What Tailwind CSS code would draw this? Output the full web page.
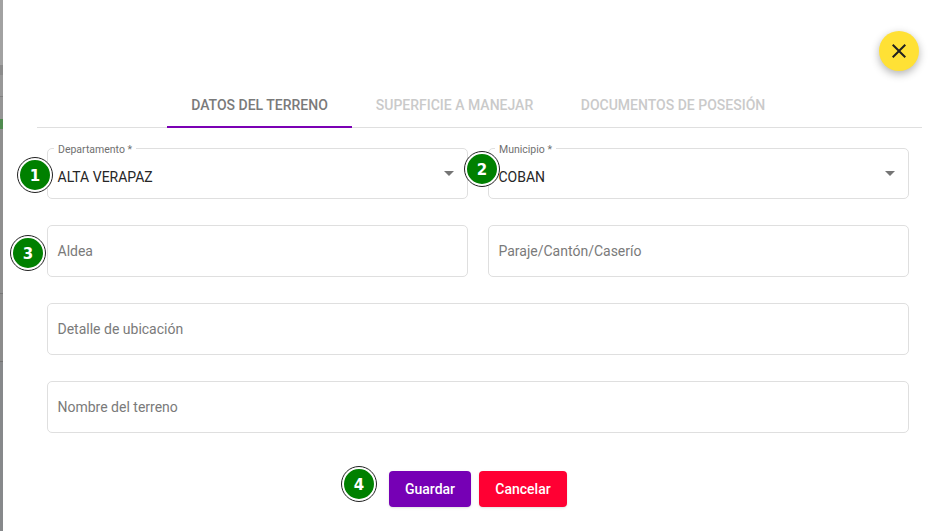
<!DOCTYPE html>
<html lang="en">
<head>
    <meta charset="UTF-8">
    <meta name="viewport" content="width=device-width, initial-scale=1.0">
    <title>Datos del terreno</title>
    <script src="https://cdn.jsdelivr.net/npm/@tailwindcss/browser@4"></script>
</head>
<body class="h-[531px] w-[947px] overflow-hidden flex bg-white font-['Roboto',sans-serif]">
    <!-- page behind the dialog -->
    <div class="w-[3px] h-full flex flex-col shrink-0">
        <div class="h-[65px] bg-[#a2a2a2]"></div>
        <div class="h-[10px] bg-[#8b8b8b]"></div>
        <div class="h-[21px] bg-[#989898]"></div>
        <div class="h-px bg-[#808080]"></div>
        <div class="h-[22px] bg-[#959595]"></div>
        <div class="h-[10px] bg-[#4f8a4f]"></div>
        <div class="h-[164px] bg-[#8f8f8f]"></div>
        <div class="h-px bg-[#777]"></div>
        <div class="h-[67px] bg-[#8c8c8c]"></div>
        <div class="h-px bg-[#737373]"></div>
        <div class="flex-1 bg-[#87898b]"></div>
    </div>

    <div class="relative flex-1 pt-[84px] rounded-tl-[4px] bg-white">
        <button class="absolute left-[876px] top-[31px] w-10 h-10 rounded-full bg-[#ffe135] shadow-[0_3px_8px_rgba(0,0,0,0.3)] flex items-center justify-center">
            <svg class="w-6 h-6" viewBox="0 0 24 24" fill="#212121"><path d="M19 6.41 17.59 5 12 10.59 6.41 5 5 6.41 10.59 12 5 17.59 6.41 19 12 13.41 17.59 19 19 17.59 13.41 12z"/></svg>
        </button>

        <!-- tabs -->
        <div class="ml-[34px] mr-[25px] h-[44px] pl-[130px] flex border-b border-[#dfdfdf] text-sm font-medium">
            <div class="relative w-[185px] pt-[11px] text-center text-[#7a7a7a]">
                DATOS DEL TERRENO
                <div class="absolute left-0 right-0 -bottom-px h-[2px] bg-[#7b00b4]"></div>
            </div>
            <div class="w-[205px] pt-[11px] text-center text-[#cacaca]">SUPERFICIE A MANEJAR</div>
            <div class="w-[232px] pt-[11px] text-center text-[#cacaca]">DOCUMENTOS DE POSESIÓN</div>
        </div>

        <!-- form -->
        <form class="ml-[44px] w-[862px] mt-[20px] flex flex-col">
            <div class="grid grid-cols-2 gap-5">
                <div class="relative h-[51px] border border-[#dfdfdf] rounded-[5px] px-[9.5px] pt-[18px] text-sm text-[#262626]">
                    <span class="absolute left-[6px] -top-[5px] px-1 bg-white text-[10.5px] leading-[12px] text-[#707070]">Departamento *</span>
                    ALTA VERAPAZ
                    <span class="absolute right-[13px] top-[22px] border-x-[5px] border-t-[5px] border-x-transparent border-t-[#757575]"></span>
                    <span class="absolute left-[-30px] top-[9px] w-[34px] h-[34px] pt-[3px] rounded-full bg-[#008000] border-2 border-white outline-1 outline-[#222] flex items-center justify-center font-['DejaVu_Sans',sans-serif] font-bold text-[15px] text-white">1</span>
                </div>
                <div class="relative h-[51px] border border-[#dfdfdf] rounded-[5px] px-[9.5px] pt-[18px] text-sm text-[#262626]">
                    <span class="absolute left-[6px] -top-[5px] px-1 bg-white text-[10.5px] leading-[12px] text-[#707070]">Municipio *</span>
                    COBAN
                    <span class="absolute right-[13px] top-[22px] border-x-[5px] border-t-[5px] border-x-transparent border-t-[#757575]"></span>
                    <span class="absolute left-[-24px] top-[3px] w-[34px] h-[34px] pt-[3px] rounded-full bg-[#008000] border-2 border-white outline-1 outline-[#222] flex items-center justify-center font-['DejaVu_Sans',sans-serif] font-bold text-[15px] text-white">2</span>
                </div>
            </div>

            <div class="grid grid-cols-2 gap-5 mt-[26px]">
                <div class="relative h-[52px] border border-[#dfdfdf] rounded-[5px] px-[9.5px] flex items-center text-sm text-[#7a7a7a]">
                    Aldea
                    <span class="absolute left-[-37px] top-[10px] w-[34px] h-[34px] pt-[3px] rounded-full bg-[#008000] border-2 border-white outline-1 outline-[#222] flex items-center justify-center font-['DejaVu_Sans',sans-serif] font-bold text-[15px] text-white">3</span>
                </div>
                <div class="h-[52px] border border-[#dfdfdf] rounded-[5px] px-[9.5px] flex items-center text-sm text-[#7a7a7a]">Paraje/Cantón/Caserío</div>
            </div>

            <div class="h-[52px] mt-[26px] border border-[#dfdfdf] rounded-[5px] px-[9.5px] flex items-center text-sm text-[#7a7a7a]">Detalle de ubicación</div>
            <div class="h-[52px] mt-[26px] border border-[#dfdfdf] rounded-[5px] px-[9.5px] flex items-center text-sm text-[#7a7a7a]">Nombre del terreno</div>

            <div class="relative mt-[38px] flex justify-center gap-2 text-sm font-medium text-white">
                <span class="absolute left-[295px] -top-[4px] w-[34px] h-[34px] pt-[3px] rounded-full bg-[#008000] border-2 border-white outline-1 outline-[#222] flex items-center justify-center font-['DejaVu_Sans',sans-serif] font-bold text-[15px] text-white">4</span>
                <button type="button" class="w-[82px] h-[36px] rounded-[4px] bg-[#7600b5] shadow-sm">Guardar</button>
                <button type="button" class="w-[88px] h-[36px] rounded-[4px] bg-[#ff0033] shadow-sm">Cancelar</button>
            </div>
        </form>
    </div>
</body>
</html>
